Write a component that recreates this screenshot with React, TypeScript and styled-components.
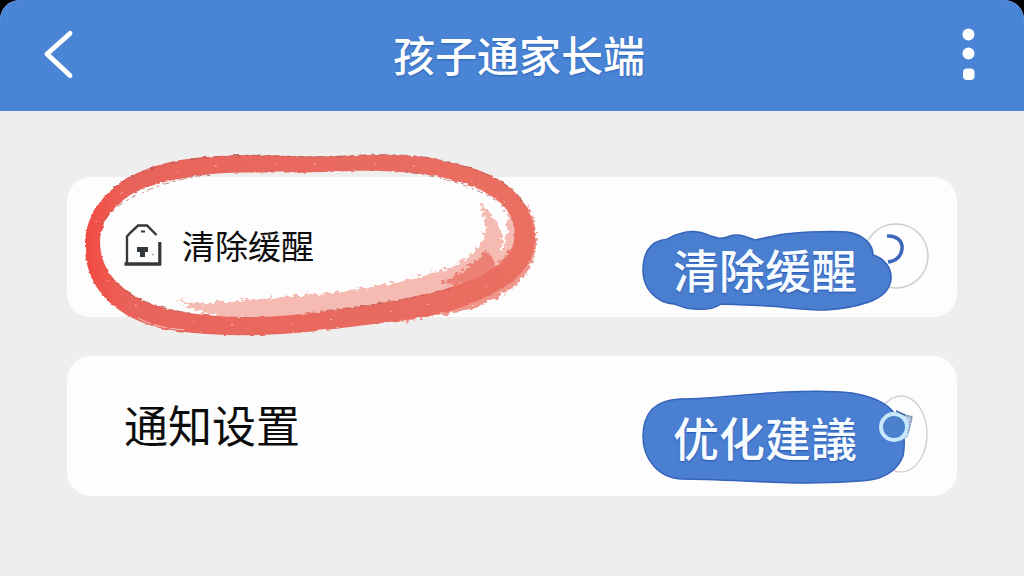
import React from 'react';
import styled, { createGlobalStyle } from 'styled-components';

const GlobalStyle = createGlobalStyle`
  * { box-sizing: border-box; }
  body {
    margin: 0;
    background: #000;
    font-family: "Noto Sans CJK SC", "Noto Sans", sans-serif;
  }
`;

const Screen = styled.div`
  min-height: 100vh;
  background: #eee;
  border-radius: 20px 20px 0 0;
  overflow: hidden;
`;

const Header = styled.header`
  display: flex;
  align-items: center;
  justify-content: space-between;
  height: 111px;
  padding: 0 40px 4px;
  background: #4a84d4;
  color: #fff;
`;

const Title = styled.h1`
  margin: 0;
  padding-left: 8px;
  font-size: 42px;
  line-height: 60px;
  font-weight: 500;
  text-shadow: 0 1px 2px #2c62b4;
`;

const IconButton = styled.button`
  display: flex;
  padding: 0;
  border: 0;
  background: none;
  color: inherit;
  cursor: pointer;
`;

const List = styled.main`
  display: flex;
  flex-direction: column;
  gap: 39px;
  padding: 66px 67px;
`;

const Card = styled.section`
  position: relative;
  display: flex;
  align-items: center;
  justify-content: space-between;
  min-height: 140px;
  padding: 0 29px 0 57px;
  border-radius: 24px;
  background: #fdfdfd;
`;

const Label = styled.h2<{ $large?: boolean }>`
  display: flex;
  align-items: center;
  gap: 20px;
  margin: 0;
  padding-bottom: 4px;
  font-size: ${(p) => (p.$large ? 44 : 33)}px;
  line-height: 60px;
  font-weight: 400;
  color: #0c0c0c;
`;

const Action = styled.button<{ $drop: number }>`
  position: relative;
  align-self: flex-end;
  width: 286px;
  height: 88px;
  margin: 0 0 ${(p) => p.$drop}px;
  padding: 2px 0 0 31px;
  border: 0;
  background: none;
  color: #f6fbff;
  font-family: inherit;
  font-size: 46px;
  font-weight: 500;
  line-height: 60px;
  text-align: left;
  text-shadow: 0 1px 2px #2556b0;
  cursor: pointer;
`;

const Backdrop = styled.svg`
  position: absolute;
  inset: 0;
  overflow: visible;
`;

const ActionText = styled.span`
  position: relative;
`;

const Scribble = styled.svg`
  position: absolute;
  left: 13px;
  top: -29px;
  pointer-events: none;
`;

const BackIcon = () => (
  <svg width="36" height="52" viewBox="40 28 36 52" fill="none" stroke="#fff" strokeWidth="5" strokeLinecap="round" strokeLinejoin="round">
    <path d="M70 33.500L47 54L70 75.500" />
  </svg>
);

const MoreIcon = () => (
  <svg width="30" height="56" viewBox="954 26 30 56" fill="#fff">
    <circle cx="968.500" cy="34.500" r="6" />
    <circle cx="968.500" cy="53.500" r="6" />
    <rect x="963" y="68.500" width="11.500" height="11.500" rx="4" />
  </svg>
);

const LockIcon = () => (
  <svg width="38" height="44" viewBox="124 223 38 44" fill="none" stroke="#33383a">
    <path d="M127 265V236.500L130 233L138 225.500H147L156.500 235" strokeWidth="2.400" />
    <path d="M124.500 264H161" strokeWidth="3.600" />
    <path d="M159.800 242V265" strokeWidth="3.200" />
    <path d="M141 231.500H145" strokeWidth="2" />
    <path d="M137 247H148V252H145V257H140V252H137Z" fill="#33383a" stroke="none" />
    <path d="M152 254.500H153.500" strokeWidth="1.500" stroke="#999" />
  </svg>
);

const RedRing = () => (
  <Scribble width="464" height="192" viewBox="80 148 464 192" aria-hidden="true">
    <defs>
      <filter id="brush" x="-5%" y="-5%" width="110%" height="110%">
        <feTurbulence type="fractalNoise" baseFrequency="0.12 0.35" numOctaves="2" seed="4" />
        <feDisplacementMap in="SourceGraphic" scale="3" xChannelSelector="R" yChannelSelector="G" />
      </filter>
      <filter id="dryBrush" x="-5%" y="-5%" width="110%" height="110%">
        <feTurbulence type="fractalNoise" baseFrequency="0.2 0.3" numOctaves="2" seed="9" />
        <feDisplacementMap in="SourceGraphic" scale="10" xChannelSelector="R" yChannelSelector="G" />
      </filter>
      <linearGradient id="red" x1="0" x2="1">
        <stop offset="0" stopColor="#f34a42" />
        <stop offset="0.1" stopColor="#e8645b" />
        <stop offset="1" stopColor="#ea6f62" />
      </linearGradient>
    </defs>
    <g filter="url(#dryBrush)">
      <path
        fill="#f5bbb3"
        d="M176 299C190 303 205 305 218 302C250 300 285 297 316 294C350 291 380 286 405 280C425 275 445 271 460 262C475 253 481 247 484 237C487 225 484 215 480 204C489 210 498 220 501 232C502 241 501 248 500 253C506 246 507 232 508 220C507 210 503 204 498 198L516 210L524 240L512 266L450 297L300 318H225C210 316 190 309 176 299Z"
      />
      <path fill="#f0968b" d="M528 205C541 230 538 258 525 275C510 293 490 302 470 309L400 322L390 315L500 275Z" />
      <path fill="#ed8075" d="M486 250C475 264 460 274 440 283L470 285L510 262L519 240L508 252L497 266Z" />
    </g>
    <path
      filter="url(#brush)"
      fill="url(#red)"
      fillRule="evenodd"
      d="M85 247C85 226 91 209 112 189C128 175 152 165 180 160C205 156 232 155 260 155C290 156 315 157 343 156C375 154 405 154 432 158C455 163 474 167 490 175C505 182 518 193 526 206C534 219 537 238 533 252C529 266 518 279 502 288C488 297 466 306 448 312C420 319 380 323 350 327C320 331 290 334 260 335C225 336 190 334 160 328C135 322 113 309 100 292C90 278 85 263 85 247Z
         M100 241C101 223 111 207 132 194C150 184 178 178 210 174C250 171 300 174 350 171C382 170 414 172 440 177C463 181 485 190 498 201C511 211 516 224 514 241C512 254 505 262 492 269C479 277 464 283 445 289C415 297 380 304 340 309C312 313 282 317 250 317C217 317 187 314 160 307C138 300 120 288 110 274C103 264 100 252 100 241Z"
    />
    <g fill="none" stroke="#a95750" strokeWidth="1" filter="url(#brush)" opacity="0.7">
      <path strokeDasharray="9 5 3 4" d="M112 189C150 160 205 156 260 155C300 157 315 157 343 156C375 154 405 154 432 158C474 167 500 177 518 195L528 210" />
      <path strokeDasharray="3 3 7 4" d="M102 224C113 203 150 183 210 174M405 172C450 177 490 192 507 210M112 278C125 296 155 308 190 313M320 311C370 306 410 300 450 288" />
    </g>
    <g fill="none" stroke="#f7c6c0" strokeWidth="1" strokeDasharray="1 37 2 59">
      <path d="M96 222C115 180 180 166 250 164H390C445 167 500 182 523 226" />
      <path d="M107 280C135 325 220 329 300 323C400 313 470 300 510 274" />
      <path d="M138 318C153 326 165 328 185 330" strokeDasharray="14 3" />
    </g>
  </Scribble>
);

const ClearBackdrop = () => (
  <Backdrop width="286" height="88" viewBox="642 222 286 88" aria-hidden="true">
    <circle cx="896" cy="255" r="32" fill="#fefefe" stroke="#cfcfcf" strokeWidth="1.500" />
    <path
      fill="#4a7fd0"
      stroke="#3563ba"
      strokeWidth="1.500"
      d="M643 270C643 251 650 242 662 239C669 240 669 235 679 233C688 229 700 230 708 234C716 237 722 239 730 235C739 232 746 236 755 239C764 237 773 235 785 233C807 231 829 230 847 231C862 233 873 242 873 254C884 257 892 267 891 278C890 290 880 297 869 301C855 306 842 308 825 309C803 309 785 306 767 305L721 303C714 308 704 309 694 308C682 308 680 304 674 303C656 302 643 287 643 270Z"
    />
    <path d="M887 235C896 234 903 240 902 248C901 256 895 260 888 261" fill="none" stroke="#3c68bb" strokeWidth="3.500" />
  </Backdrop>
);

const AdviceBackdrop = () => (
  <Backdrop width="286" height="88" viewBox="642 391 286 88" aria-hidden="true">
    <ellipse cx="901" cy="434" rx="26" ry="38" fill="#fefefe" stroke="#d2d2d2" strokeWidth="1.500" />
    <path
      fill="#4a7fd2"
      stroke="#3563ba"
      strokeWidth="1.500"
      d="M643 437C643 412 655 400 680 399C716 399 747 394 785 392C808 391 835 391 852 393C870 396 886 402 894 413C906 422 905 446 903 456C898 469 888 477 870 480C845 483 824 483 795 483C755 482 714 479 681 479C657 478 643 457 643 437Z"
    />
    <path d="M899 413L913 416L908 437L899 441Z" fill="#b9cbdc" />
    <circle cx="894" cy="427" r="13" fill="#4b80cc" stroke="#c8e9fb" strokeWidth="4" />
    <path d="M904 415L912 417L908 433" fill="none" stroke="#6f8fae" strokeWidth="1.500" strokeDasharray="2 1" />
    <path d="M896 411L905 415" fill="none" stroke="#3f67ac" strokeWidth="1.500" />
  </Backdrop>
);

export default function App() {
  return (
    <>
      <GlobalStyle />
      <Screen lang="zh-CN">
        <Header>
          <IconButton aria-label="返回"><BackIcon /></IconButton>
          <Title>孩子通家长端</Title>
          <IconButton aria-label="更多"><MoreIcon /></IconButton>
        </Header>
        <List>
          <Card>
            <Label><LockIcon />清除缓醒</Label>
            <Action $drop={6}>
              <ClearBackdrop />
              <ActionText>清除缓醒</ActionText>
            </Action>
            <RedRing />
          </Card>
          <Card>
            <Label $large>通知设置</Label>
            <Action $drop={17}>
              <AdviceBackdrop />
              <ActionText>优化建議</ActionText>
            </Action>
          </Card>
        </List>
      </Screen>
    </>
  );
}
